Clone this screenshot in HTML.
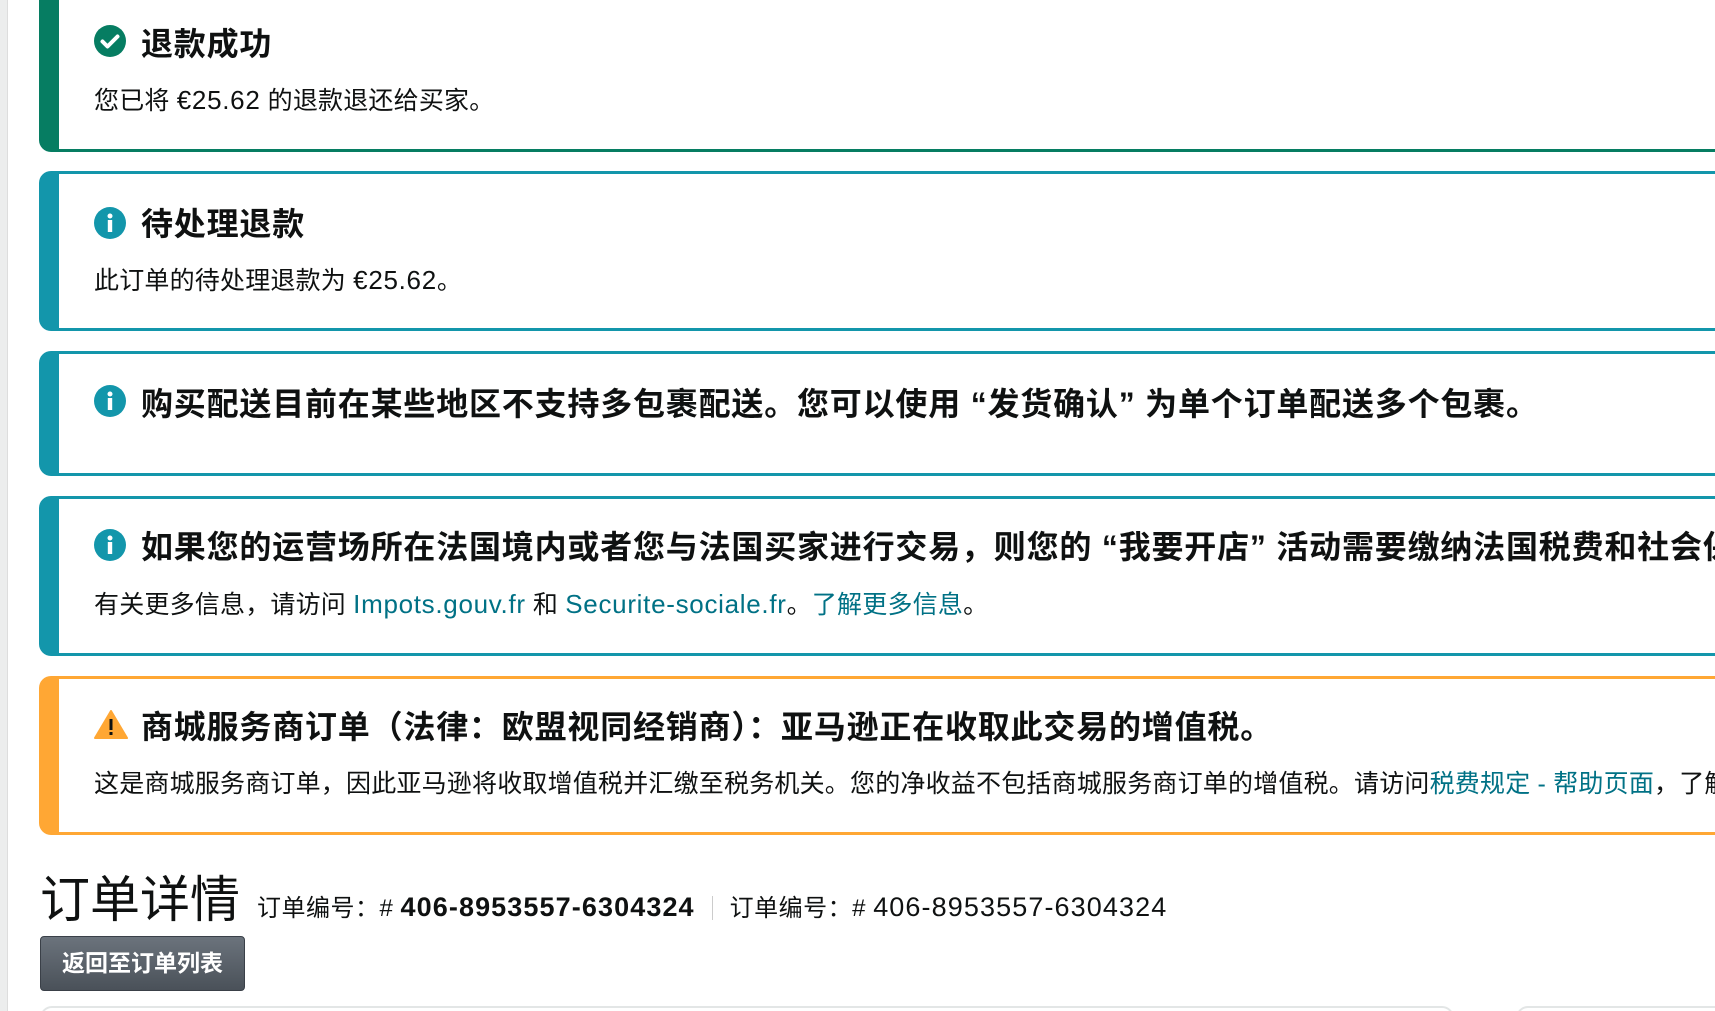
<!DOCTYPE html>
<html><head><meta charset="utf-8"><style>
html,body{margin:0;padding:0;background:#fff;width:1715px;height:1011px;overflow:hidden;position:relative;font-family:"Liberation Sans","Noto Sans CJK SC",sans-serif;color:#0f1111}
.strip{position:absolute;left:0;top:0;width:7px;height:1011px;background:#eceded;border-right:1px solid #ddd}
.wrap{position:absolute;left:0;top:0;width:1715px;height:1011px;overflow:hidden}
.box{position:absolute;left:39px;width:1720px;box-sizing:border-box;border:3px solid;border-left-width:20px;border-radius:12px;background:#fff}
.g{border-color:#067d62}.t{border-color:#1396ab}.o{border-color:#ffa734}
.ic{position:absolute;left:35px;width:32px;height:32px}
.ttl{position:absolute;left:82px;font-weight:bold;font-size:32px;letter-spacing:0.8px;white-space:nowrap;line-height:40px}
.bd{position:absolute;left:35px;font-size:25px;letter-spacing:0.2px;white-space:nowrap;line-height:34px}
.bd .l{font-size:26px;letter-spacing:0.7px}
a{color:#007185;text-decoration:none}
.num{font-size:27px;letter-spacing:1.1px}
</style></head><body>
<div class="wrap">
<div class="strip"></div>

<div class="box g" style="top:-12px;height:164px">
 <svg class="ic" style="top:34px" viewBox="0 0 32 32"><circle cx="16" cy="16" r="16" fill="#067d62"/><path d="M8.5 16.5l5 5 10-10" stroke="#fff" stroke-width="4" fill="none" stroke-linecap="round" stroke-linejoin="round"/></svg>
 <div class="ttl" style="top:33px">退款成功</div>
 <div class="bd" style="top:92px">您已将 <span class="l">€25.62</span> 的退款退还给买家。</div>
</div>

<div class="box t" style="top:171px;height:160px">
 <svg class="ic" style="top:33px" viewBox="0 0 32 32"><circle cx="16" cy="16" r="16" fill="#1396ab"/><circle cx="16" cy="9" r="2.5" fill="#fff"/><rect x="13.8" y="13" width="4.4" height="12" fill="#fff"/></svg>
 <div class="ttl" style="top:30px">待处理退款</div>
 <div class="bd" style="top:89px">此订单的待处理退款为 <span class="l">€25.62</span>。</div>
</div>

<div class="box t" style="top:351px;height:125px">
 <svg class="ic" style="top:31px" viewBox="0 0 32 32"><circle cx="16" cy="16" r="16" fill="#1396ab"/><circle cx="16" cy="9" r="2.5" fill="#fff"/><rect x="13.8" y="13" width="4.4" height="12" fill="#fff"/></svg>
 <div class="ttl" style="top:30px">购买配送目前在某些地区不支持多包裹配送。您可以使用 “发货确认” 为单个订单配送多个包裹。</div>
</div>

<div class="box t" style="top:496px;height:160px">
 <svg class="ic" style="top:30px" viewBox="0 0 32 32"><circle cx="16" cy="16" r="16" fill="#1396ab"/><circle cx="16" cy="9" r="2.5" fill="#fff"/><rect x="13.8" y="13" width="4.4" height="12" fill="#fff"/></svg>
 <div class="ttl" style="top:28px">如果您的运营场所在法国境内或者您与法国买家进行交易，则您的 “我要开店” 活动需要缴纳法国税费和社会保险费。</div>
 <div class="bd" style="top:88px">有关更多信息，请访问 <a class="l">Impots.gouv.fr</a> 和 <a class="l">Securite-sociale.fr</a>。<a>了解更多信息</a>。</div>
</div>

<div class="box o" style="top:676px;height:159px">
 <svg class="ic" style="top:30px;width:34px" viewBox="0 0 34 32"><path d="M17 2L33 29H1Z" fill="#ffa734" stroke="#ffa734" stroke-width="2" stroke-linejoin="round"/><rect x="15.5" y="10" width="3" height="11" fill="#0f1111"/><rect x="15.5" y="23" width="3" height="3" fill="#0f1111"/></svg>
 <div class="ttl" style="top:28px">商城服务商订单（法律：欧盟视同经销商）：亚马逊正在收取此交易的增值税。</div>
 <div class="bd" style="top:88px">这是商城服务商订单，因此亚马逊将收取增值税并汇缴至税务机关。您的净收益不包括商城服务商订单的增值税。请访问<a>税费规定 - 帮助页面</a>，了解更多信息。</div>
</div>

<div style="position:absolute;left:40px;top:868px;font-size:50px;line-height:64px;white-space:nowrap">订单详情</div>
<div style="position:absolute;left:257px;top:891px;font-size:24px;letter-spacing:0.5px;line-height:32px;white-space:nowrap">订单编号：# <b class="num">406-8953557-6304324</b><span style="display:inline-block;width:1px;height:24px;background:#ccc;margin:0 17px;vertical-align:-4px"></span>订单编号：# <span class="num">406-8953557-6304324</span></div>
<div style="position:absolute;left:40px;top:936px;width:205px;height:55px;box-sizing:border-box;border:1px solid #3a4048;border-radius:4px;background:linear-gradient(#6b737c,#4a5159);color:#fff;font-weight:bold;font-size:23px;line-height:53px;text-align:center">返回至订单列表</div>
<div style="position:absolute;left:40px;top:1006px;width:1410px;height:30px;border:2px solid #e3e6e6;border-radius:12px"></div>
<div style="position:absolute;left:1516px;top:1006px;width:300px;height:30px;border:2px solid #e3e6e6;border-radius:12px"></div>
</div>
</body></html>
